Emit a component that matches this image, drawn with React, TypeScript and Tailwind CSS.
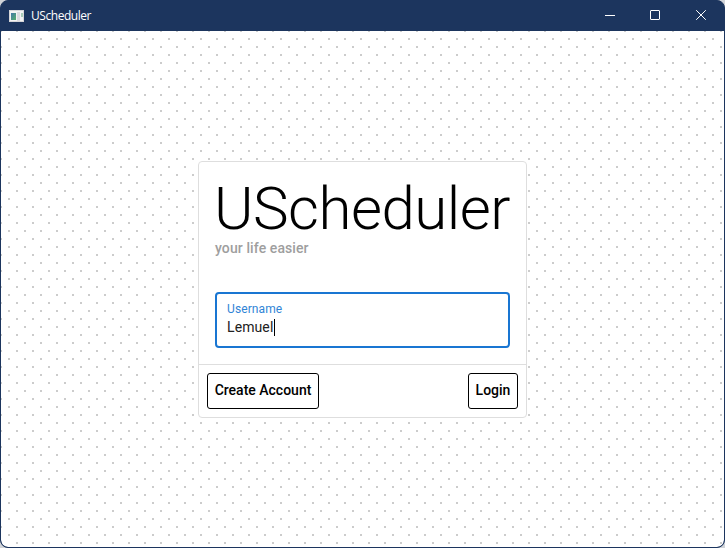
import type { ReactNode } from "react";

function WindowButton({ children }: { children: ReactNode }) {
  return (
    <button className="flex h-[30px] w-[46px] items-center justify-center pb-[2px]" type="button">
      <svg className="overflow-visible" width="10" height="10" viewBox="0 0 10 10" fill="none" stroke="#fff">
        {children}
      </svg>
    </button>
  );
}

function TitleBar() {
  return (
    <header className="flex h-[30px] shrink-0 items-center">
      <svg className="ml-2 -mt-px shrink-0" width="15" height="12" viewBox="0 0 15 12">
        <defs>
          <linearGradient id="pane" x1="0" y1="0" x2="1" y2="1">
            <stop offset="0" stopColor="#4478a8" />
            <stop offset="1" stopColor="#58b06c" />
          </linearGradient>
        </defs>
        <rect width="15" height="12" fill="#d6d6d8" />
        <rect x="1" y="1" width="13" height="10" fill="#f4f4f4" />
        <rect x="2" y="3" width="5" height="7" fill="url(#pane)" />
        <rect x="8" y="2" width="3" height="9" fill="#dcdce0" />
        <rect x="12" y="3" width="2" height="4" fill="#a9cdb9" />
      </svg>
      <span className="ml-[7px] font-['Open_Sans',sans-serif] text-[12px] leading-4 tracking-[-0.45px] text-white">UScheduler</span>
      <div className="ml-auto flex">
        <WindowButton>
          <path d="M1 5.5h10" />
        </WindowButton>
        <WindowButton>
          <rect x=".5" y=".5" width="9" height="9" rx=".5" />
        </WindowButton>
        <WindowButton>
          <path d="M.2.2l9.6 9.6M9.8.2L.2 9.8" />
        </WindowButton>
      </div>
    </header>
  );
}

function ActionButton({ children, className }: { children: ReactNode; className: string }) {
  return (
    <button
      type="button"
      className={`h-9 rounded-[3px] border border-black bg-white pb-[2px] text-center text-[14px] font-medium leading-6 whitespace-nowrap ${className}`}
    >
      {children}
    </button>
  );
}

export default function App() {
  return (
    <div className="h-[548px] w-[725px] bg-[#d0d3d8]">
      <div className="flex h-full flex-col overflow-hidden rounded-[8px] border border-[#1c355e] bg-[#1c355e]">
        <TitleBar />
        <main className="flex flex-1 rounded-b-[7px] bg-white bg-[image:conic-gradient(at_2px_2px,transparent_75%,#cccccc_0),conic-gradient(at_2px_2px,transparent_75%,#cccccc_0)] bg-[size:16px_16px] bg-[position:7px_7px,-1px_-1px] pt-[130px] pl-[197px] font-[Roboto,sans-serif] text-black">
          <section className="flex h-[257px] w-[329px] flex-col rounded-[4px] border border-[#dedede] bg-white">
            <div className="flex h-[202px] flex-col px-4 pt-[17px]">
              <h1 className="-ml-px h-[58px] text-[60px] font-light leading-[60px] tracking-[-0.5px] whitespace-nowrap">UScheduler</h1>
              <p className="text-[14px] font-medium leading-[22px] tracking-[0.1px] text-[#9e9e9e]">your life easier</p>
              <label className="mt-[33px] block h-14 rounded-[4px] border-2 border-[#1976d2] px-[10px] pt-[7px]">
                <span className="block text-[12px] leading-4 tracking-[0.1px] text-[#3084d6]">Username</span>
                <span className="flex h-5 items-center text-[14px] leading-5 tracking-[0.1px] text-[#212121]">
                  Lemuel
                  <span className="ml-px h-[17px] w-px bg-black" />
                </span>
              </label>
            </div>
            <div className="flex flex-1 justify-between border-t border-[#dedede] p-2">
              <ActionButton className="w-[112px]">Create Account</ActionButton>
              <ActionButton className="w-[50px]">Login</ActionButton>
            </div>
          </section>
        </main>
      </div>
    </div>
  );
}
